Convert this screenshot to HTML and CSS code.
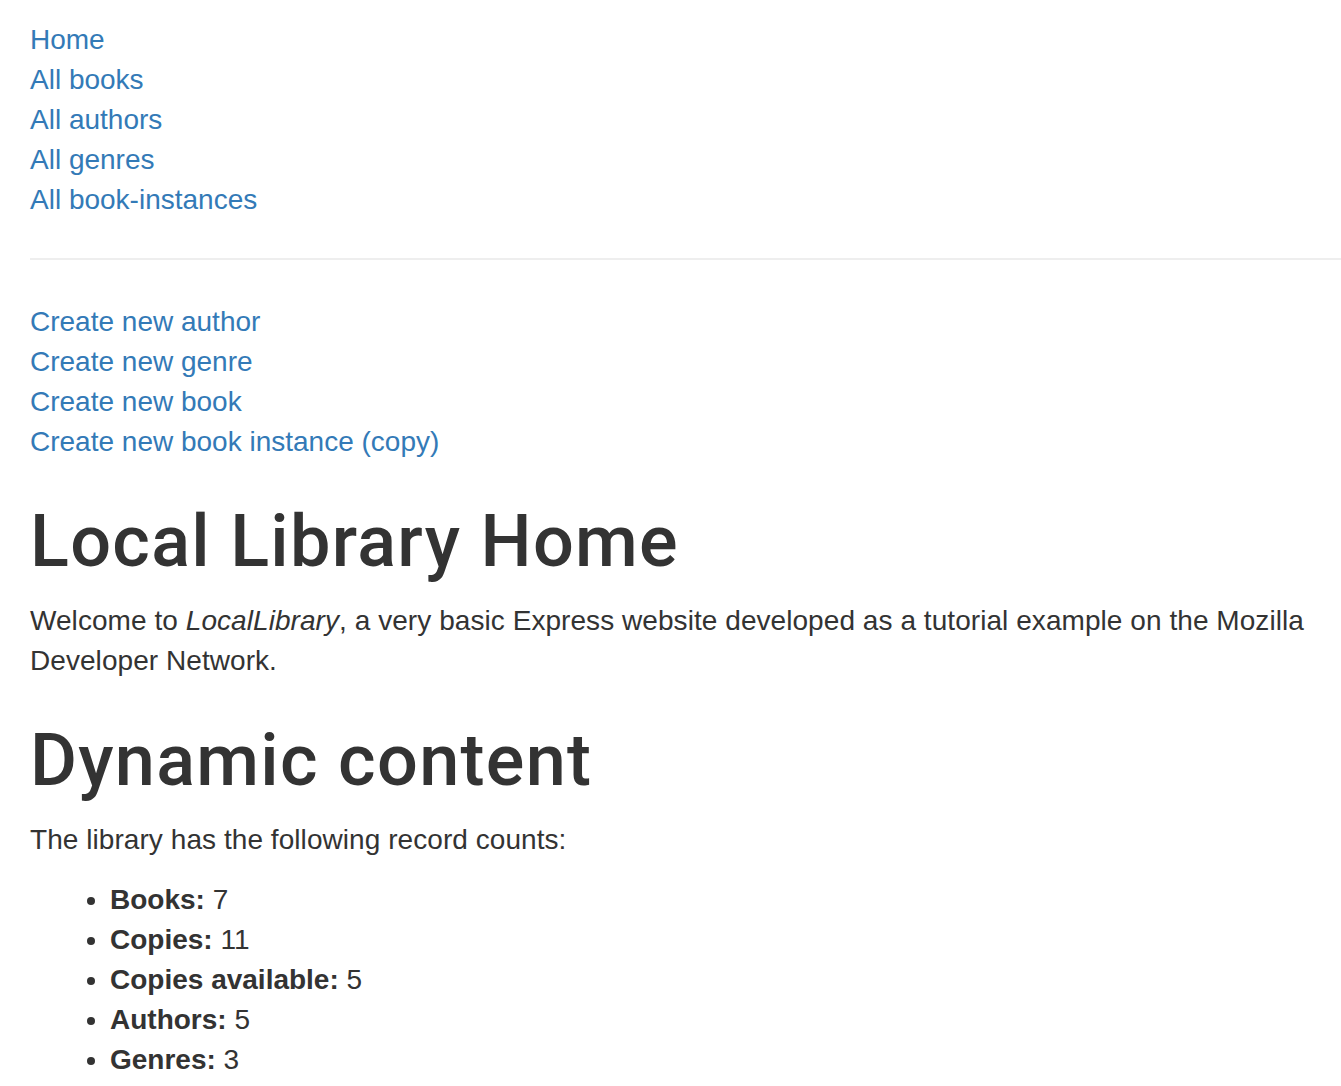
FILE: index.html
```html
<!DOCTYPE html>
<html lang="en">
<head>
<meta charset="utf-8">
<title>Local Library</title>
<link rel="stylesheet" href="styles.css">
</head>
<body>
<div class="container">
  <div class="sidebar">
    <ul class="sidebar-nav">
      <li><a href="#">Home</a></li>
      <li><a href="#">All books</a></li>
      <li><a href="#">All authors</a></li>
      <li><a href="#">All genres</a></li>
      <li><a href="#">All book-instances</a></li>
    </ul>
    <hr class="divider">
    <ul class="sidebar-nav sidebar-nav-second">
      <li><a href="#">Create new author</a></li>
      <li><a href="#">Create new genre</a></li>
      <li><a href="#">Create new book</a></li>
      <li><a href="#">Create new book instance (copy)</a></li>
    </ul>
  </div>
  <div class="content">
    <h1 class="title">Local Library Home</h1>
    <p class="text">Welcome to <em>LocalLibrary</em>, a very basic Express website developed as a tutorial example on the Mozilla Developer Network.</p>
    <h1 class="title">Dynamic content</h1>
    <p class="text">The library has the following record counts:</p>
    <ul class="counts">
      <li><strong>Books:</strong> 7</li>
      <li><strong>Copies:</strong> 11</li>
      <li><strong>Copies available:</strong> 5</li>
      <li><strong>Authors:</strong> 5</li>
      <li><strong>Genres:</strong> 3</li>
    </ul>
  </div>
</div>
</body>
</html>
```
FILE: styles.css
```css
html, body {
  margin: 0;
  padding: 0;
  background: #fff;
}
body {
  font-family: "Liberation Sans", Arial, sans-serif;
  font-size: 28px;
  line-height: 40px;
  color: #333;
  overflow-x: hidden;
}
.container {
  padding: 0 0 0 30px;
}
a {
  color: #337ab7;
  text-decoration: none;
}
.sidebar-nav {
  list-style: none;
  padding: 0;
  margin: 20px 0 20px 0;
}
.sidebar-nav-second {
  margin-top: 0;
}
.divider {
  border: 0;
  border-top: 2px solid #eee;
  margin: 38px 0 42px 0;
  height: 0;
}
.title {
  font-family: Roboto, "Liberation Sans", Arial, sans-serif;
  font-size: 72px;
  line-height: 79px;
  font-weight: 500;
  letter-spacing: 1.3px;
  margin: 40px 0 20px 0;
}
.text {
  margin: 0 0 20px 0;
  padding-right: 30px;
  letter-spacing: 0.06px;
}
.counts {
  margin: 0;
  padding-left: 80px;
}
```
